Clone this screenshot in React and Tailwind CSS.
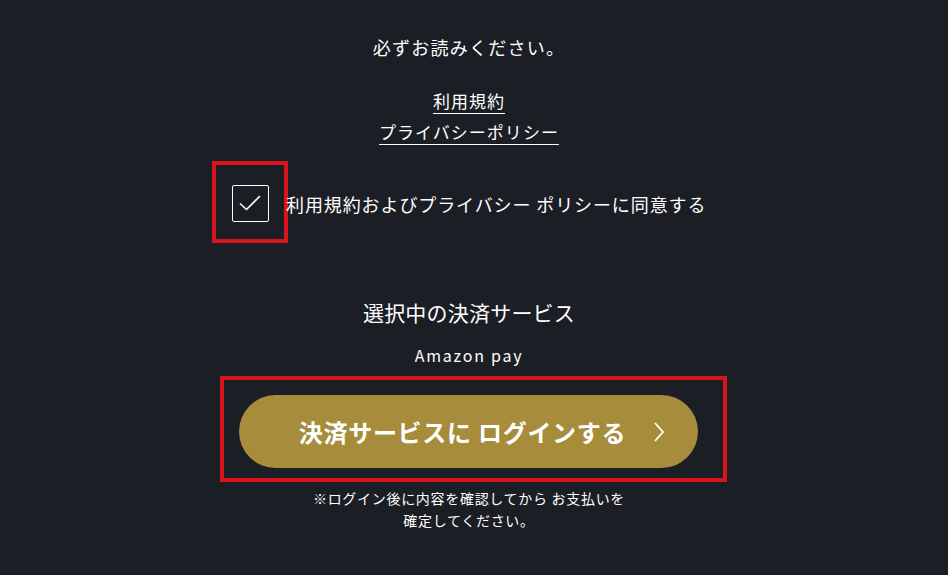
import React from "react";

const jp = { fontFamily: '"Noto Sans CJK JP", "Noto Sans", sans-serif' };

function App() {
  return (
    <div className="w-[948px] h-[575px] bg-[#1b1e25] text-white overflow-hidden" style={jp}>
      <div className="flex flex-col items-center pr-[10px]">
        {/* notice */}
        <p className="mt-[34px] text-[18px] leading-[26px] tracking-[0.07em]">必ずお読みください。</p>
        <div className="mt-[28px] flex flex-col items-center gap-[5px] text-[17px] leading-[26px] tracking-[0.06em]">
          <a className="underline underline-offset-[5px] decoration-1">利用規約</a>
          <a className="underline underline-offset-[5px] decoration-1">プライバシーポリシー</a>
        </div>
      </div>

      {/* agree checkbox */}
      <div className="mt-[16px] ml-[212px] flex items-center">
        <div className="w-[76px] h-[82px] border-4 border-[#d9151b] flex items-center justify-center shrink-0">
          <div className="w-[37px] h-[37px] border border-white rounded-[2px] flex items-center justify-center mt-[2px]">
            <svg width="24" height="18" viewBox="0 0 24 18" fill="none" stroke="white" strokeWidth="1.6">
              <path d="M2 9.5 L8.5 15.5 L22 2" />
            </svg>
          </div>
        </div>
        <span className="-ml-[2px] text-[18px] leading-[26px] tracking-[0.05em] mt-[4px]">
          利用規約およびプライバシー ポリシーに同意する
        </span>
      </div>

      <div className="flex flex-col items-center pr-[10px]">
        <p className="mt-[54px] text-[21px] leading-[30px] tracking-[0.01em]">選択中の決済サービス</p>
        <p className="mt-[16px] text-[16px] leading-[24px] tracking-[0.11em]">Amazon pay</p>
      </div>

      {/* login button */}
      <div className="mt-[9px] ml-[220px] w-[507px] h-[106px] border-4 border-[#d9151b] pt-[15px] pl-[15px]">
        <button className="w-[459px] h-[73px] rounded-full bg-[#a68c3b] flex items-center justify-center gap-[26px] pl-[28px]">
          <span className="text-[24px] font-bold leading-none tracking-[0.03em]">決済サービスに ログインする</span>
          <svg width="14" height="22" viewBox="0 0 14 22" fill="none" stroke="white" strokeWidth="1.8">
            <path d="M3 2 L11 11 L3 20" />
          </svg>
        </button>
      </div>

      <div className="mt-[5px] pr-[10px] flex flex-col items-center text-[14px] leading-[22px] tracking-[0.05em]">
        <p>※ログイン後に内容を確認してから お支払いを</p>
        <p>確定してください。</p>
      </div>
    </div>
  );
}

export default App;
